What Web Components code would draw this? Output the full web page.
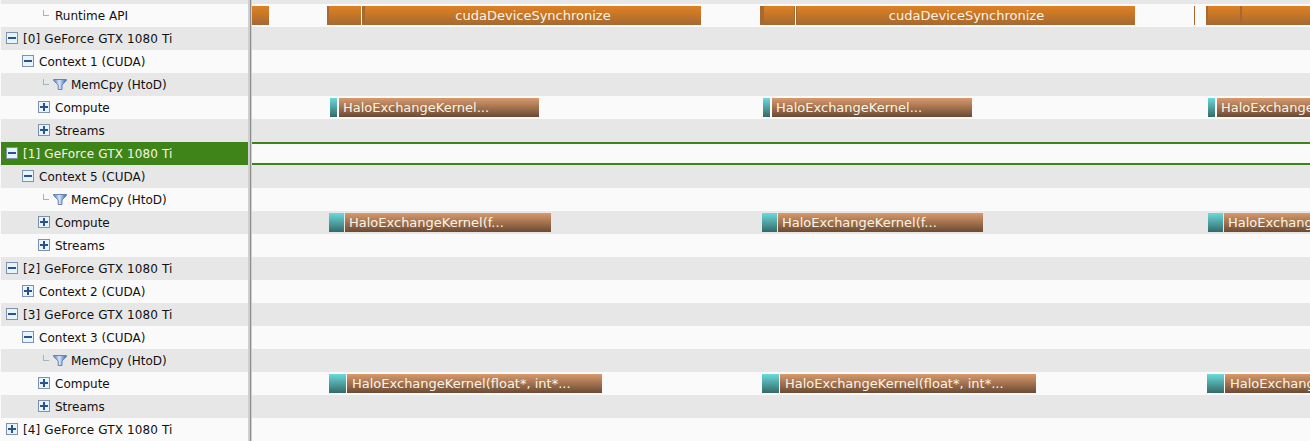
<!DOCTYPE html>
<html lang="en"><head><meta charset="utf-8"><title>Profiler timeline</title>
<style>html,body{margin:0;height:441px;overflow:hidden;background:#fafafa}body{font:12px "DejaVu Sans",sans-serif}</style></head>
<body><profiler-view></profiler-view>
<script>
class TreeIcon extends HTMLElement{
 connectedCallback(){
  const k=this.getAttribute('kind');
  const box=`<svg width="12" height="12" shape-rendering="crispEdges"><rect width="12" height="12" fill="#8091ae"/><rect x="1" y="1" width="10" height="10" fill="#e4f5fd"/><path fill="#2d5190" d="M2 5h8v2H2z${k==='plus'?'M5 2h2v8H5z':''}"/></svg>`;
  const elbow='<svg width="6" height="12" shape-rendering="crispEdges"><path fill="#9db6c6" d="M0 1h1v6H0zM0 6h6v1H0z"/></svg>';
  const funnel='<svg width="14" height="12"><defs><linearGradient id="f"><stop offset=".1" stop-color="#6f93c8"/><stop offset=".45" stop-color="#d5e5f6"/><stop offset=".85" stop-color="#5c84be"/></linearGradient></defs><path d="M.5 1.5h13v1L9 7v4.5H5.2V7L.5 2.5z" fill="url(#f)" stroke="#6784b2"/></svg>';
  this.attachShadow({mode:'open'}).innerHTML=`<style>:host{display:block;flex:none;height:12px}svg{display:block}</style>${k==='funnel'?funnel:k==='elbow'?elbow:box}`;
 }}
customElements.define('tree-icon',TreeIcon);
class TreeRow extends HTMLElement{
 connectedCallback(){
  const icons=this.getAttribute('icons').split(' ').map(k=>`<tree-icon kind="${k}"></tree-icon>`).join('');
  this.attachShadow({mode:'open'}).innerHTML=`<style>:host{display:flex;box-sizing:border-box;height:23px;padding-left:calc(var(--indent)*1px - 1px);padding-bottom:1px;align-items:center;gap:4px;color:#111;white-space:pre}:host([selected]){background:#3f8418!important;color:#f4f7e4}span{line-height:22px;margin-left:1px;padding-top:1px}:host([icons="elbow"]) span{margin-left:2px}:host([icons~="funnel"]) span{margin-left:0}</style>${icons}<span><slot></slot></span>`;
 }}
customElements.define('tree-row',TreeRow);
class TimeBar extends HTMLElement{
 connectedCallback(){
  this.attachShadow({mode:'open'}).innerHTML=`<style>:host{display:block;box-sizing:border-box;flex:none;height:19px;overflow:hidden;white-space:pre;color:#fbf4e6;font-size:13px;line-height:19px;padding-left:4px}
:host([kind=api]){background:linear-gradient(#e08122,#a56932);text-align:center;padding:0}:host([kind=edge]){background:#a56932;padding:0}:host([kind=copy]){background:linear-gradient(#6bdada,#336a69);padding:0}:host([kind=kernel]){background:linear-gradient(#d89a6c,#6c4a33)}</style><slot></slot>`;
 }}
customElements.define('time-bar',TimeBar);
class TimeLane extends HTMLElement{
 connectedCallback(){
  this.attachShadow({mode:'open'}).innerHTML=`<style>:host{display:flex;box-sizing:border-box;height:23px;padding-top:2px;overflow:hidden}:host([selected]){border:solid #3f8418;border-width:2px 0;background:#fafafa!important}</style><slot></slot>`;
 }}
customElements.define('time-lane',TimeLane);
const rows=[
 [43,'elbow','Runtime API',[['api',252,269],['edge',327,329],['api',329,361],['edge',362,365],['api',365,701,'cudaDeviceSynchronize'],['edge',760,764],['api',764,794],['edge',794,795],['edge',796,797],['api',797,1135,'cudaDeviceSynchronize',1],['edge',1194,1195],['edge',1206,1208],['api',1208,1240],['edge',1240,1242],['api',1242,1310]]],
 [6,'minus','[0] GeForce GTX 1080 Ti'],[22,'minus','Context 1 (CUDA)'],[43,'elbow funnel','MemCpy (HtoD)'],
 [38,'plus','Compute',[['copy',330,337],['kernel',339,539,'HaloExchangeKernel...'],['copy',763,770],['kernel',772,972,'HaloExchangeKernel...'],['copy',1208,1215],['kernel',1217,1310,'HaloExchangeKernel...']]],
 [38,'plus','Streams'],[6,'minus','[1] GeForce GTX 1080 Ti',null,1],[22,'minus','Context 5 (CUDA)'],[43,'elbow funnel','MemCpy (HtoD)'],
 [38,'plus','Compute',[['copy',329,344],['kernel',345,551,'HaloExchangeKernel(f...'],['copy',762,777],['kernel',778,983,'HaloExchangeKernel(f...'],['copy',1208,1223],['kernel',1224,1310,'HaloExchangeKernel(f...']]],
 [38,'plus','Streams'],[6,'minus','[2] GeForce GTX 1080 Ti'],[22,'plus','Context 2 (CUDA)'],[6,'minus','[3] GeForce GTX 1080 Ti'],[22,'minus','Context 3 (CUDA)'],[43,'elbow funnel','MemCpy (HtoD)'],
 [38,'plus','Compute',[['copy',329,346],['kernel',347,602,'HaloExchangeKernel(float*, int*...',5],['copy',762,779],['kernel',780,1036,'HaloExchangeKernel(float*, int*...',5],['copy',1207,1224],['kernel',1225,1310,'HaloExchangeKernel(float*, int*...',5]]],
 [38,'plus','Streams'],[6,'plus','[4] GeForce GTX 1080 Ti']];
class ProfilerView extends HTMLElement{
 connectedCallback(){
  const tree=rows.map(([indent,icons,text,,sel])=>`<tree-row icons="${icons}" style="--indent:${indent}${text[0]==='['?';letter-spacing:.12px':text[0]==='M'?';letter-spacing:-.03px':text.startsWith('Con')?';letter-spacing:.03px':''}" ${sel?'selected':''}>${text}</tree-row>`).join('');
  const lanes=rows.map(([,,,bars,sel])=>{let end=252;
   return `<time-lane ${sel?'selected':''}>${(bars||[]).map(([k,a,b,t='',pad])=>{const s=`<time-bar kind="${k}" style="margin-left:${a-end}px;width:${b-a}px${pad?`;padding-left:${pad}px`:''}">${t}</time-bar>`;end=b;return s}).join('')}</time-lane>`}).join('');
  this.attachShadow({mode:'open'}).innerHTML=`<style>:host{display:grid;grid-template-columns:248px 4px 1fr;height:441px}
.col{padding-top:4px;background:#e7e7e7;min-width:0}.tree{border-left:1px solid #fafafa}
.col>:nth-child(odd){background:#fafafa}.split{background:linear-gradient(90deg,#cfcfcf 2px,#8c8c8c 2px 3px,#cfcfcf 3px)}</style>
<div class="col tree">${tree}</div><div class="split"></div><div class="col">${lanes}</div>`;
 }}
customElements.define('profiler-view',ProfilerView);
</script></body></html>
